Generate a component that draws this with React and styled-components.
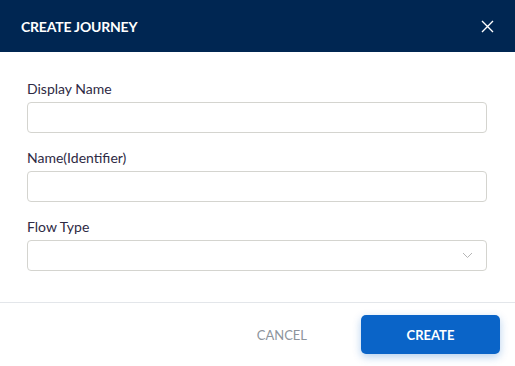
import React from 'react';
import styled, { createGlobalStyle } from 'styled-components';

const GlobalStyle = createGlobalStyle`
  html, body {
    margin: 0;
    padding: 0;
    background: #ffffff;
  }
  body {
    font-family: Lato, "Open Sans", sans-serif;
  }
`;

export default function App() {
  const fields = [
    { id: 'displayName', label: 'Display Name' },
    { id: 'name', label: 'Name(Identifier)' },
    { id: 'flowType', label: 'Flow Type', select: true },
  ];

  return (
    <Modal>
      <GlobalStyle />
      <Header>
        <Title>CREATE JOURNEY</Title>
        <CloseButton aria-label="Close">
          <svg width="13" height="13" viewBox="0 0 13 13">
            <path d="M1 1L12 12M12 1L1 12" stroke="#ffffff" strokeWidth="1.4" fill="none" />
          </svg>
        </CloseButton>
      </Header>
      <Body>
        {fields.map((field) => (
          <Field key={field.id}>
            <Label htmlFor={field.id}>{field.label}</Label>
            <InputWrap>
              <Input id={field.id} readOnly={field.select} />
              {field.select && (
                <Chevron width="11" height="7" viewBox="0 0 11 7">
                  <path d="M1 1L5.5 5.5L10 1" stroke="#b5b5b5" strokeWidth="1" fill="none" />
                </Chevron>
              )}
            </InputWrap>
          </Field>
        ))}
      </Body>
      <Footer>
        <CancelButton>CANCEL</CancelButton>
        <CreateButton>CREATE</CreateButton>
      </Footer>
    </Modal>
  );
}

const Modal = styled.div`
  width: 515px;
  height: 366px;
  background: #ffffff;
  display: flex;
  flex-direction: column;
  overflow: hidden;
`;

const Header = styled.div`
  height: 52px;
  background-color: #002652;
  display: flex;
  align-items: center;
  justify-content: space-between;
  padding: 0 21px;
  box-sizing: border-box;
`;

const Title = styled.h1`
  margin: 0;
  color: #ffffff;
  font-size: 14px;
  font-weight: 700;
  letter-spacing: -0.2px;
`;

const CloseButton = styled.button`
  background: none;
  border: none;
  padding: 0;
  display: flex;
  cursor: pointer;
`;

const Body = styled.div`
  padding: 28px 28px 0 27px;
  display: flex;
  flex-direction: column;
  gap: 16px;
  border-bottom: 1px solid #e3e6ea;
  height: 251px;
  box-sizing: border-box;
`;

const Field = styled.div`
  display: flex;
  flex-direction: column;
  gap: 5px;
`;

const Label = styled.label`
  font-size: 14px;
  color: #2e2a44;
  line-height: 17px;
`;

const InputWrap = styled.div`
  position: relative;
`;

const Input = styled.input`
  width: 100%;
  height: 31px;
  box-sizing: border-box;
  border: 1px solid #d4d4cf;
  border-radius: 4px;
  outline: none;
  padding: 0 10px;
  font-size: 14px;
  font-family: inherit;
`;

const Chevron = styled.svg`
  position: absolute;
  right: 14px;
  top: 12px;
`;

const Footer = styled.div`
  flex: 1;
  display: flex;
  align-items: center;
  justify-content: flex-end;
  padding: 0 15px 0 0;
  gap: 54px;
`;

const CancelButton = styled.button`
  background: none;
  border: none;
  color: #8d949c;
  font-size: 13px;
  font-family: inherit;
  padding: 0;
  cursor: pointer;
`;

const CreateButton = styled.button`
  width: 139px;
  height: 39px;
  background-color: #0a64c8;
  color: #ffffff;
  border: none;
  border-radius: 5px;
  font-size: 13px;
  font-weight: 700;
  font-family: inherit;
  box-shadow: 0 3px 8px rgba(10, 100, 200, 0.3);
  cursor: pointer;
`;
